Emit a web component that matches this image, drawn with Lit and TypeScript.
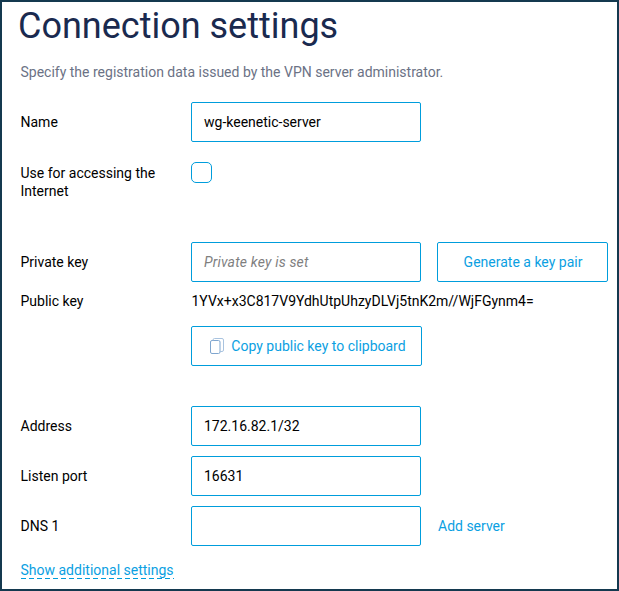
import { LitElement, html, css } from "lit";
import { customElement } from "lit/decorators.js";

@customElement("app-root")
export class AppRoot extends LitElement {
  static styles = css`
    :host {
      display: block;
      box-sizing: border-box;
      width: 619px;
      height: 591px;
      border: 2px solid #14394f;
      background: #fff;
      overflow: hidden;
      font-family: Roboto, sans-serif;
      font-size: 14px;
      color: #000;
      padding: 0 9px 0 19px;
    }
    h1 {
      margin: 0 0 0 -3px;
      padding-top: 1px;
      font-size: 36px;
      font-weight: 400;
      line-height: 47px;
      color: #1a2a4f;
    }
    .desc {
      margin: 12px 0 0 -0.5px;
      line-height: 20px;
      color: #6b7285;
    }
    .row {
      display: flex;
      align-items: center;
      height: 40px;
    }
    .label {
      width: 170px;
      flex: none;
      text-indent: -0.5px;
    }
    .field {
      box-sizing: border-box;
      width: 230px;
      height: 40px;
      border: 1px solid #009ddc;
      border-radius: 2px;
      padding: 0 12px;
      display: flex;
      align-items: center;
    }
    .placeholder {
      font-style: italic;
      color: #7f7f7f;
      letter-spacing: 0.17px;
    }
    .btn {
      box-sizing: border-box;
      height: 40px;
      border: 1px solid #009ddc;
      border-radius: 2px;
      color: #0b9fe2;
      display: flex;
      align-items: center;
      justify-content: center;
      gap: 7px;
    }
    .gen { width: 171px; margin-left: 16px; padding-left: 1px; }
    .copy { width: 231px; padding-left: 3px; }
    .check-row { display: flex; align-items: flex-start; height: 60px; margin-top: 20px; }
    .check-label { width: 170px; flex: none; line-height: 18px; padding-top: 2px; margin-left: -0.5px; margin-right: 0.5px; }
    .check {
      box-sizing: border-box;
      width: 21px;
      height: 21px;
      border: 1px solid #009ddc;
      border-radius: 5px;
    }
    .name { margin-top: 20px; }
    .private { margin-top: 20px; }
    .pub { height: auto; line-height: 20px; margin-top: 9px; }
    .pub-value { margin-left: 0.5px; }
    .copy-row { margin-top: 15px; }
    .address { margin-top: 40px; }
    .stack { margin-top: 10px; }
    .link { color: #0b9fe2; margin-left: 17px; }
    .more {
      display: inline-block;
      margin: 16px 0 0 -0.5px;
      color: #0b9fe2;
      line-height: 16px;
      padding-bottom: 1px;
      background: repeating-linear-gradient(90deg, #009ddc 0 5px, transparent 5px 8px) left bottom / 100% 1px no-repeat;
    }
    svg { display: block; flex: none; }
  `;

  render() {
    return html`
      <h1>Connection settings</h1>
      <p class="desc">Specify the registration data issued by the VPN server administrator.</p>
      <div class="row name">
        <div class="label">Name</div>
        <div class="field">wg-keenetic-server</div>
      </div>
      <div class="check-row">
        <div class="check-label">Use for accessing the Internet</div>
        <div class="check"></div>
      </div>
      <div class="row private">
        <div class="label">Private key</div>
        <div class="field placeholder">Private key is set</div>
        <div class="btn gen">Generate a key pair</div>
      </div>
      <div class="row pub">
        <div class="label">Public key</div>
        <div class="pub-value">1YVx+x3C817V9YdhUtpUhzyDLVj5tnK2m//WjFGynm4=</div>
      </div>
      <div class="row copy-row">
        <div class="label"></div>
        <div class="btn copy">
          <svg width="14" height="16" viewBox="0 0 14 16" fill="none" stroke="#7fa6cf" stroke-width="1">
            <rect x="0.5" y="2.5" width="9.5" height="13" rx="1.5"></rect>
            <path d="M3 2.5V2A1.5 1.5 0 0 1 4.500.5H12A1.500 1.500 0 0 1 13.500 2V12A1.500 1.500 0 0 1 12 13.500H10" stroke="#a9c3df"></path>
          </svg>
          Copy public key to clipboard
        </div>
      </div>
      <div class="row address">
        <div class="label">Address</div>
        <div class="field">172.16.82.1/32</div>
      </div>
      <div class="row stack">
        <div class="label">Listen port</div>
        <div class="field">16631</div>
      </div>
      <div class="row stack">
        <div class="label">DNS 1</div>
        <div class="field"></div>
        <div class="link">Add server</div>
      </div>
      <div class="more">Show additional settings</div>
    `;
  }
}
